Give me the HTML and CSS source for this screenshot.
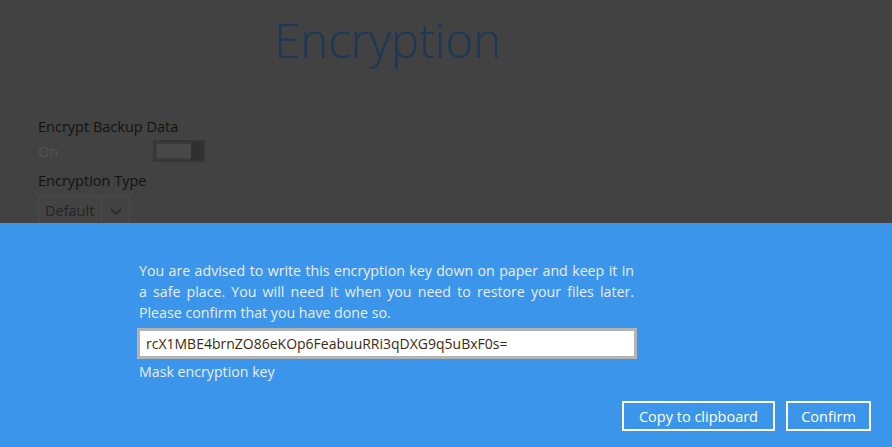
FILE: index.html
```
<!DOCTYPE html>
<html>
<head>
<meta charset="utf-8">
<link rel="stylesheet" href="styles.css">
</head>
<body>
<div class="page">
  <section class="backdrop">
    <h1 class="title">Encryption</h1>
    <div class="form">
      <div class="label">Encrypt Backup Data</div>
      <div class="toggle-row">
        <span class="state">On</span>
        <span class="toggle"><span class="toggle-track"></span><span class="toggle-knob"></span></span>
      </div>
      <div class="label label-2">Encryption Type</div>
      <div class="select"><span class="select-text">Default</span><span class="select-arrow"><svg width="12" height="10" viewBox="0 0 12 10"><path d="M1 2 L6 6.5 L11 2 L11 5 L6 9 L1 5 Z" fill="#2c2c2c"/></svg></span></div>
    </div>
  </section>
  <section class="dialog">
    <div class="dialog-body">
      <p class="message">You are advised to write this encryption key down on paper and keep it in a safe place. You will need it when you need to restore your files later. Please confirm that you have done so.</p>
      <div class="key-box">rcX1MBE4brnZO86eKOp6FeabuuRRi3qDXG9q5uBxF0s=</div>
      <div class="mask">Mask encryption key</div>
    </div>
    <div class="actions">
      <button class="btn btn-copy">Copy to clipboard</button>
      <button class="btn btn-confirm">Confirm</button>
    </div>
  </section>
</div>
</body>
</html>
```
FILE: styles.css
```
html, body {
  margin: 0;
  padding: 0;
}
body {
  width: 892px;
  height: 447px;
  overflow: hidden;
  font-family: "Open Sans", "Noto Sans", sans-serif;
  background: #424242;
}
.page {
  display: flex;
  flex-direction: column;
  height: 447px;
}
.backdrop {
  height: 223px;
  background: #424242;
  overflow: hidden;
  padding-left: 38px;
  box-sizing: border-box;
}
.title {
  margin: 6px 0 0 236px;
  font-weight: 300;
  font-size: 47.3px;
  line-height: 68px;
  color: #1b3856;
}
.form {
  margin-top: 43px;
}
.label {
  font-size: 14.5px;
  line-height: 20px;
  color: #121212;
}
.label-2 {
  margin-top: 8px;
}
.toggle-row {
  display: flex;
  align-items: center;
  height: 24px;
  margin-top: 2px;
}
.state {
  width: 115px;
  font-size: 14.5px;
  color: #525252;
}
.toggle {
  display: flex;
  width: 52px;
  height: 22px;
  box-sizing: border-box;
  border: 2px solid #363636;
  background: #3b3b3b;
}
.toggle-track {
  flex: 1;
  margin: 2px 0 2px 2px;
  background: #484848;
}
.toggle-knob {
  width: 12px;
  background: #303030;
}
.select {
  display: flex;
  width: 92px;
  height: 30px;
  margin-top: 5px;
  box-sizing: border-box;
  border: 1px solid #4a4a4a;
  background: #434343;
}
.select-text {
  padding: 4px 0 0 6px;
  width: 56px;
  font-size: 14.5px;
  line-height: 20px;
  color: #232323;
  border-right: 1px solid #4a4a4a;
}
.select-arrow {
  display: flex;
  align-items: center;
  justify-content: center;
  flex: 1;
}
.dialog {
  height: 224px;
  background: #3b95ea;
  display: flex;
  flex-direction: column;
  box-sizing: border-box;
  padding: 37px 21px 0 137px;
}
.dialog-body {
  width: 500px;
}
.message {
  margin: 0;
  padding-left: 2px;
  width: 495px;
  font-size: 14.2px;
  line-height: 21px;
  text-align: justify;
  color: #e8eefa;
}
.key-box {
  margin-top: 5px;
  height: 31px;
  box-sizing: border-box;
  border: 3px solid #b3b3b3;
  background: #fff;
  padding: 0 6px;
  font-size: 14px;
  line-height: 25px;
  color: #3a2a10;
}
.mask {
  margin-top: 2px;
  padding-left: 2px;
  font-size: 14.2px;
  line-height: 22px;
  color: #e8eefa;
}
.actions {
  display: flex;
  justify-content: flex-end;
  gap: 11px;
  margin-top: 18px;
}
.btn {
  font-family: "Open Sans", "Noto Sans", sans-serif;
  font-size: 14.5px;
  color: #fff;
  background: transparent;
  border: 2px solid #fff;
  height: 30px;
  padding: 0;
  text-align: center;
  cursor: pointer;
}
.btn-copy {
  width: 153px;
}
.btn-confirm {
  width: 85px;
}
```
